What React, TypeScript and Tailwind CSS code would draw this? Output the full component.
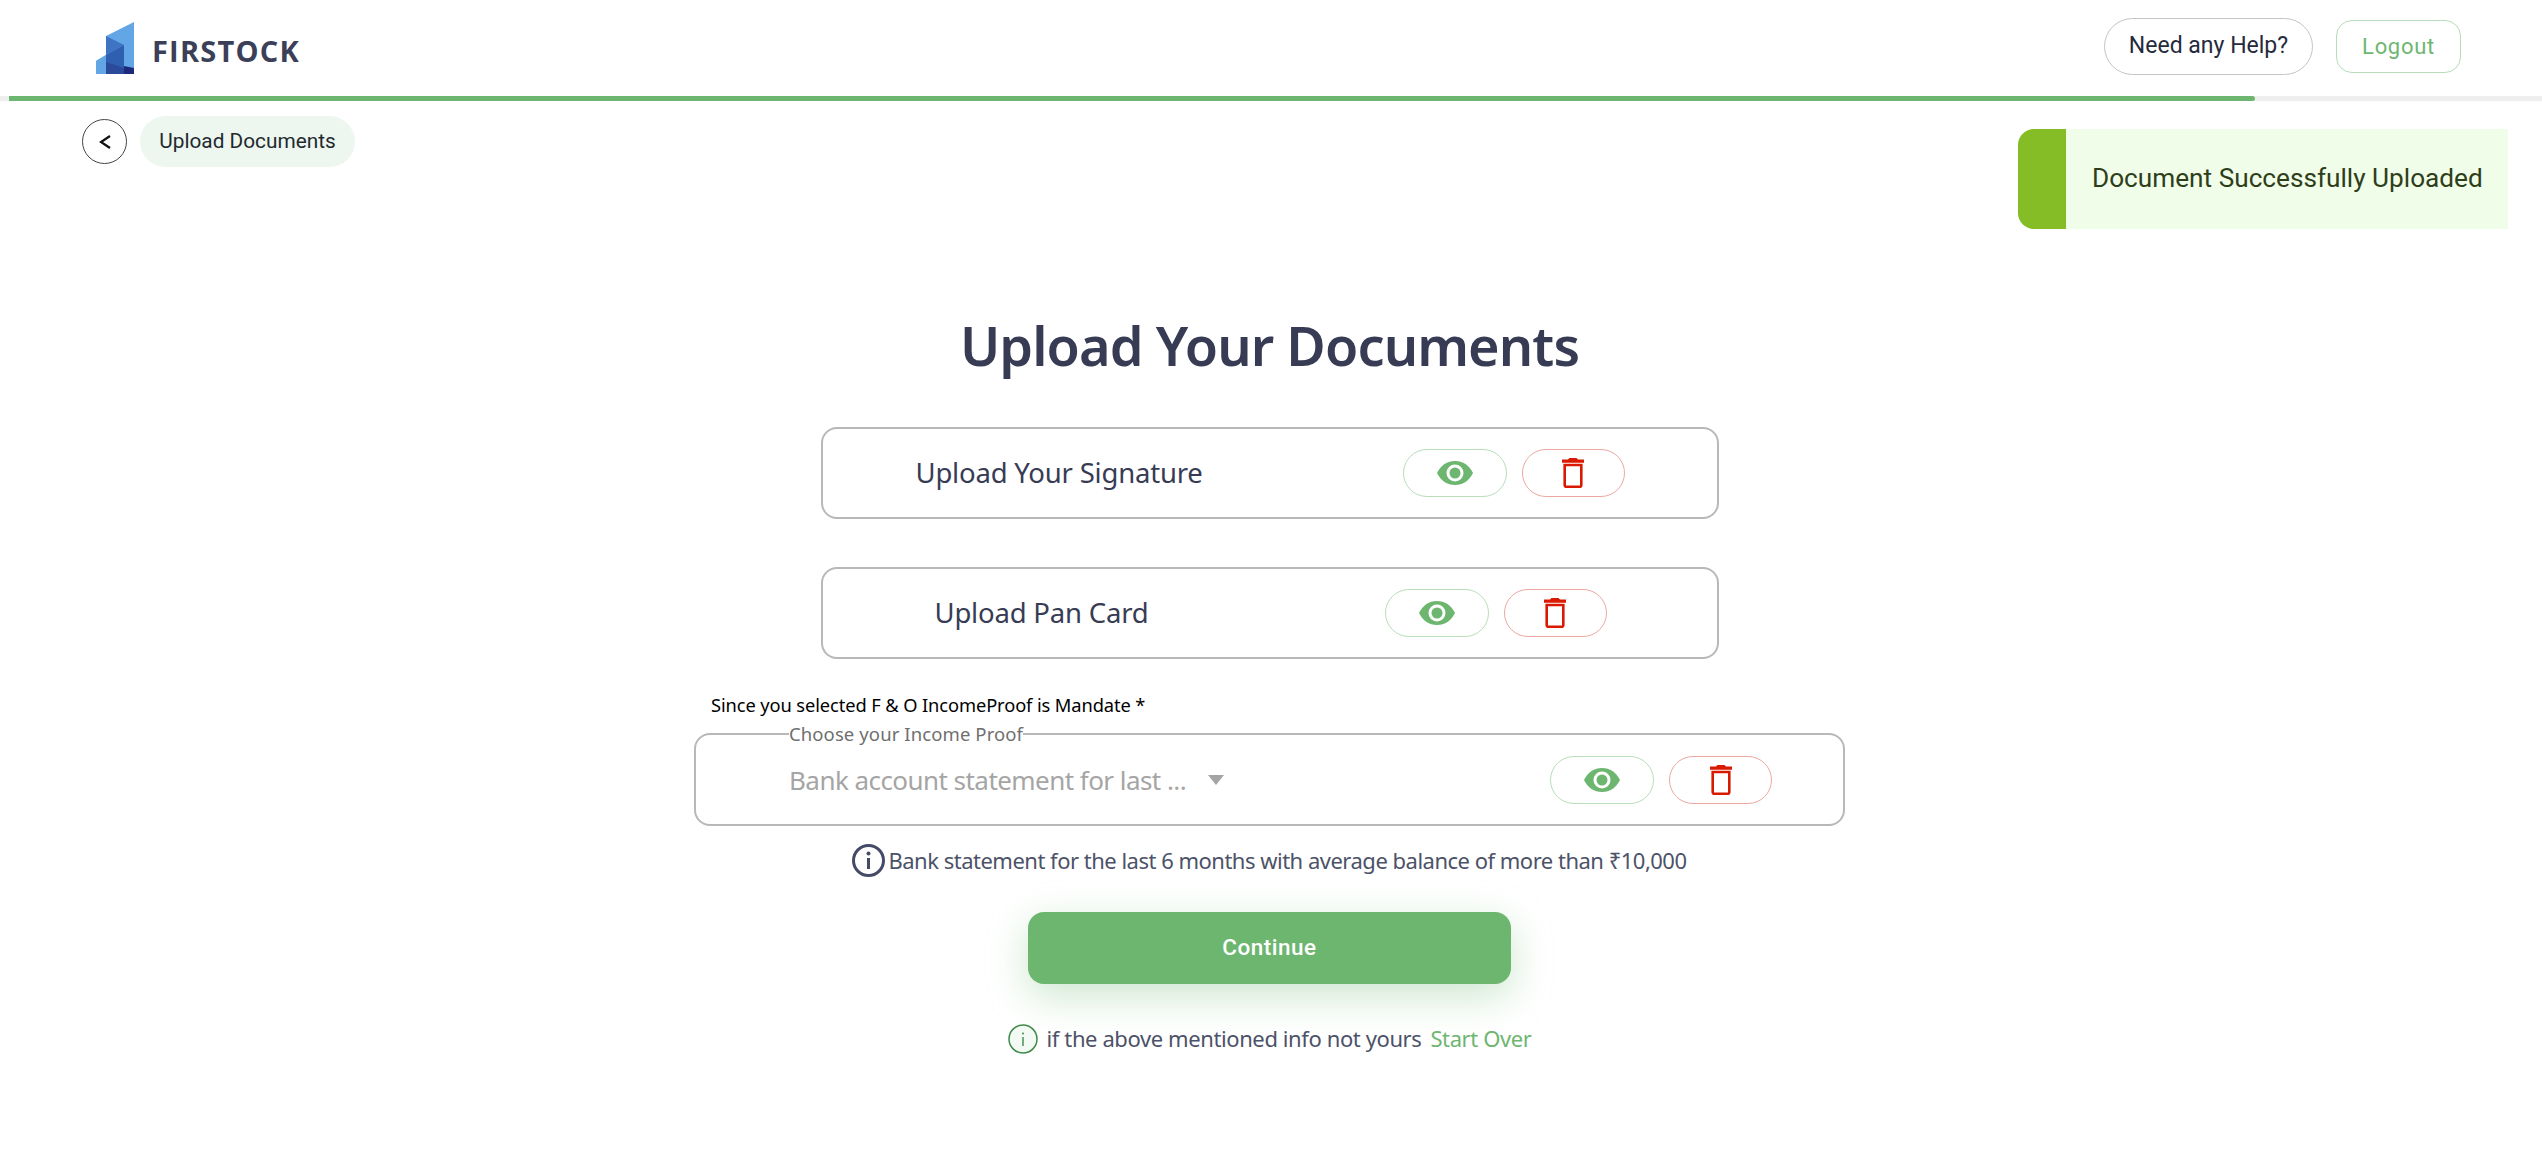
import React from 'react';

const Logo = () => (
  <svg width="38" height="52" viewBox="0 0 38 52" className="shrink-0 mt-[3px]">
    <polygon points="38,0 10,14 10,33 0,39 0,52 38,52" fill="#62a6e6" />
    <polygon points="10,14 28,23 10,33" fill="#3f74c4" />
    <polygon points="28,23 28,52 10,52 10,33" fill="#2f5fb0" />
    <polygon points="0,39 10,33 10,52 0,52" fill="#62a6e6" />
    <polygon points="10,40 28,46 28,52 10,52" fill="#2b4a9c" />
    <polygon points="28,44 38,46 38,52 28,52" fill="#1d2a7c" />
  </svg>
);

const EyeIcon = () => (
  <svg width="36" height="26" viewBox="0 0 36 26">
    <path d="M0 13C4 5 10 1 18 1s14 4 18 12c-4 8-10 12-18 12S4 21 0 13z" fill="#6db670" />
    <circle cx="18" cy="13" r="8.5" fill="#fff" />
    <circle cx="18" cy="13" r="5.5" fill="#6db670" />
  </svg>
);

const TrashIcon = () => (
  <svg width="22" height="30" viewBox="0 0 22 30">
    <path d="M6 1.500 7.500 0h7L16 1.500h6v3.200H0V1.500z" fill="#d91a00" />
    <path d="M2.700 7h16.600v20.300a1.500 1.500 0 0 1-1.500 1.500H4.200a1.500 1.500 0 0 1-1.500-1.500z" fill="none" stroke="#d91a00" strokeWidth="2.600" />
  </svg>
);

const Actions = () => (
  <div className="flex items-center gap-[15px]">
    <button className="w-[104px] h-[48px] rounded-[24px] border border-[#b9deba] flex items-center justify-center">
      <EyeIcon />
    </button>
    <button className="w-[103px] h-[48px] rounded-[24px] border border-[#eda8a2] flex items-center justify-center">
      <TrashIcon />
    </button>
  </div>
);

const UploadCard = ({ label, spacing }: { label: string; spacing: string }) => (
  <div className={`w-[898px] h-[92px] border-2 border-[#b8b8b8] rounded-[16px] flex items-center justify-between ${spacing}`}>
    <span className="text-[27.500px] text-[#373c54] font-['Noto_Sans'] tracking-[-0.2px]">{label}</span>
    <Actions />
  </div>
);

export default function App() {
  return (
    <div className="min-h-[1164px] bg-white font-['Roboto',sans-serif]">
      <header className="h-[96px] flex items-center justify-between pl-[96px] pr-[81px] pb-[4px]">
        <div className="flex items-center gap-[18px]">
          <Logo />
          <span className="font-['Open_Sans'] font-bold text-[29px] tracking-[1.2px] text-[#3b3f58] mt-[9px]">FIRSTOCK</span>
        </div>
        <div className="flex items-center gap-[23px]">
          <button className="w-[209px] h-[57px] rounded-[29px] border border-[#c4c4c4] text-[23px] text-[#252a3c]">Need any Help?</button>
          <button className="w-[125px] h-[53px] rounded-[16px] border border-[#b7dcb9] text-[22px] text-[#6db670] tracking-[0.7px]">Logout</button>
        </div>
      </header>

      <div className="h-[5px] bg-[#eeeeee]">
        <div className="ml-[9px] w-[2246px] h-full bg-[#6db670] rounded-r-sm" />
      </div>

      <div className="relative">
        <div className="flex items-center gap-[13px] pl-[82px] pt-[15px]">
          <button className="w-[45px] h-[45px] rounded-full border border-[#444] flex items-center justify-center">
            <svg width="12" height="16" viewBox="0 0 12 16">
              <polyline points="11,2 2,8 11,14" fill="none" stroke="#111" strokeWidth="2.200" />
            </svg>
          </button>
          <div className="w-[215px] h-[51px] rounded-[26px] bg-[#edf7ef] flex items-center justify-center text-[20.800px] text-[#1f2a30]">Upload Documents</div>
        </div>

        <div className="absolute left-[2018px] top-[28px] w-[490px] h-[100px] flex bg-[#f0fde9] rounded-l-[16px]">
          <div className="w-[48px] bg-[#84bd25] rounded-l-[16px]" />
          <div className="flex-1 flex items-center pl-[26px] text-[26.200px] text-[#2f3e1a] whitespace-nowrap">Document Successfully Uploaded</div>
        </div>
      </div>

      <main className="flex flex-col items-center pr-[3px]">
        <h1 className="mt-[140px] text-[54px] leading-[76px] font-semibold text-[#373c54] font-['Noto_Sans'] tracking-[-0.9px]">Upload Your Documents</h1>

        <div className="mt-[44px] flex flex-col gap-[48px]">
          <UploadCard label="Upload Your Signature" spacing="pl-[93px] pr-[92px]" />
          <UploadCard label="Upload Pan Card" spacing="pl-[112px] pr-[110px]" />
        </div>

        <p className="w-[1151px] mt-[34px] pl-[17px] text-[18.300px] leading-[24px] text-black font-['Noto_Sans'] tracking-[-0.1px]">Since you selected F &amp; O IncomeProof is Mandate *</p>

        <fieldset className="w-[1151px] h-[101px] mt-[8px] border-2 border-[#b8b8b8] rounded-[16px] pl-[93px] pr-[71px]">
          <legend className="text-[18.500px] leading-[18px] text-[#6f6f6f] font-['Noto_Sans'] tracking-[0.1px]">Choose your Income Proof</legend>
          <div className="h-[74px] flex items-center justify-between">
            <div className="flex items-center gap-[22px]">
              <span className="text-[26px] text-[#a5a5a5] font-['Noto_Sans'] tracking-[-0.55px]">Bank account statement for last ...</span>
              <svg width="16" height="10" viewBox="0 0 16 10"><polygon points="0,0 16,0 8,10" fill="#a5a5a5" /></svg>
            </div>
            <Actions />
          </div>
        </fieldset>

        <div className="mt-[18px] flex items-center gap-[3px] text-[22px] text-[#4c5268] font-['Noto_Sans'] tracking-[-0.5px]">
          <svg width="33" height="33" viewBox="0 0 33 33">
            <circle cx="16.5" cy="16.500" r="15" fill="none" stroke="#454b66" strokeWidth="3" />
            <rect x="15" y="14" width="3" height="11" fill="#454b66" />
            <circle cx="16.5" cy="9.500" r="2" fill="#454b66" />
          </svg>
          <span>Bank statement for the last 6 months with average balance of more than ₹10,000</span>
        </div>

        <button className="mt-[35px] w-[483px] h-[72px] rounded-[16px] bg-[#6db670] text-white text-[22.500px] font-medium tracking-[0.5px] shadow-[0_12px_40px_rgba(109,182,112,0.35)]">Continue</button>

        <div className="mt-[38px] flex items-center text-[22px] text-[#4c5268] font-['Noto_Sans'] tracking-[-0.4px]">
          <svg width="30" height="30" viewBox="0 0 30 30" className="mr-[9px]">
            <circle cx="15" cy="15" r="14" fill="#f3faf3" stroke="#3f8a4a" strokeWidth="1.500" />
            <rect x="14.300" y="13" width="1.400" height="9" fill="#3f8a4a" />
            <circle cx="15" cy="9.500" r="1" fill="#3f8a4a" />
          </svg>
          <span>if the above mentioned info not yours</span>
          <span className="ml-[9px] text-[#6db670]">Start Over</span>
        </div>
      </main>
    </div>
  );
}
